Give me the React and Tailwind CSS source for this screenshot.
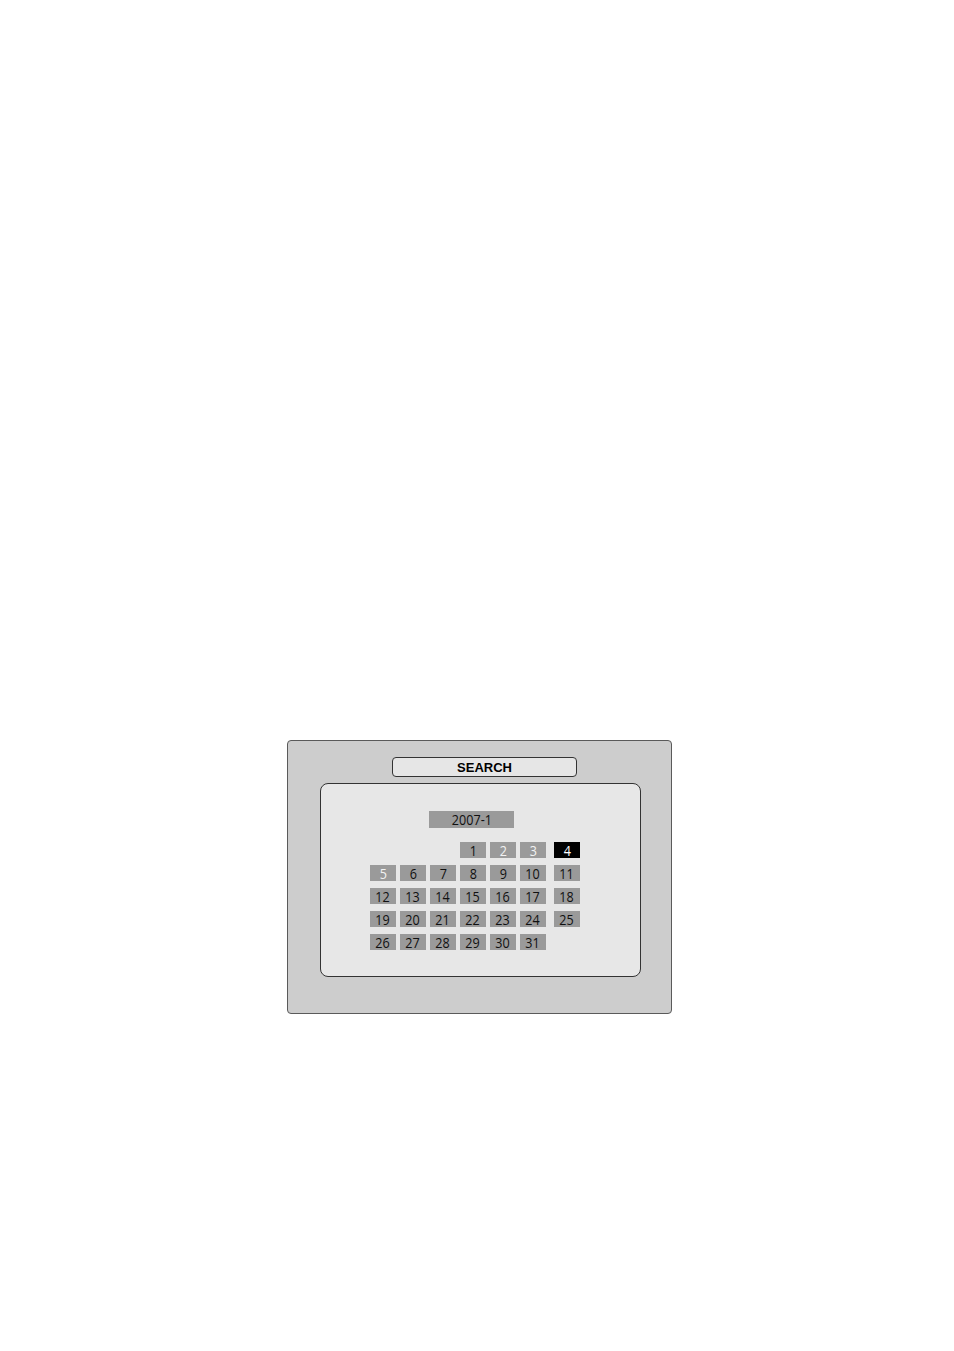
import React from "react";

const rows = [
  [null, null, null, 1, 2, 3, 4],
  [5, 6, 7, 8, 9, 10, 11],
  [12, 13, 14, 15, 16, 17, 18],
  [19, 20, 21, 22, 23, 24, 25],
  [26, 27, 28, 29, 30, 31, null],
];

const numFont = { fontFamily: '"Open Sans", "DejaVu Sans Condensed", sans-serif' };

function Cell({ n }) {
  if (n === null) return <div className="h-[16px] w-[26px]" />;
  let cls = "bg-[#9a9a9a] text-[#111]";
  if (n === 2 || n === 3 || n === 5) cls = "bg-[#9a9a9a] text-[#f2f2f2]";
  if (n === 4) cls = "bg-black text-white";
  return (
    <div className={`h-[16px] w-[26px] flex items-center justify-center text-[15px] leading-[16px] ${cls}`} style={numFont}>
      <span className="inline-block scale-x-[0.84]">{n}</span>
    </div>
  );
}

export default function App() {
  return (
    <div className="w-[954px] h-[1351px] bg-white pt-[740px] pl-[287px]">
      <div className="w-[385px] h-[274px] bg-[#cdcdcd] border border-[#5a5a5a] rounded-[4px] pt-[16px]">
        <div className="ml-[104px] w-[185px] h-[20px] bg-[#e6e6e6] border border-[#333] rounded-[4px] flex items-center justify-center">
          <span
            className="font-bold text-[13px] text-black leading-none"
            style={{ fontFamily: '"Liberation Sans", Arial, sans-serif' }}
          >
            SEARCH
          </span>
        </div>
        <div className="ml-[32px] mt-[6px] w-[321px] h-[194px] bg-[#e7e7e7] border border-[#333] rounded-[8px] pt-[27px]">
          <div
            className="ml-[108px] w-[85px] h-[17px] bg-[#9a9a9a] flex items-center justify-center text-[15px] text-[#111] leading-[17px]"
            style={numFont}
          >
            <span className="inline-block scale-x-[0.84]">2007-1</span>
          </div>
          <div className="ml-[49px] mt-[14px] grid grid-cols-[26px_26px_26px_26px_26px_26px_30px] gap-x-[4px] gap-y-[7px]">
            {rows.flat().map((n, i) => (
              <div key={i} className={i % 7 === 6 ? "flex justify-end" : ""}>
                <Cell n={n} />
              </div>
            ))}
          </div>
        </div>
      </div>
    </div>
  );
}
